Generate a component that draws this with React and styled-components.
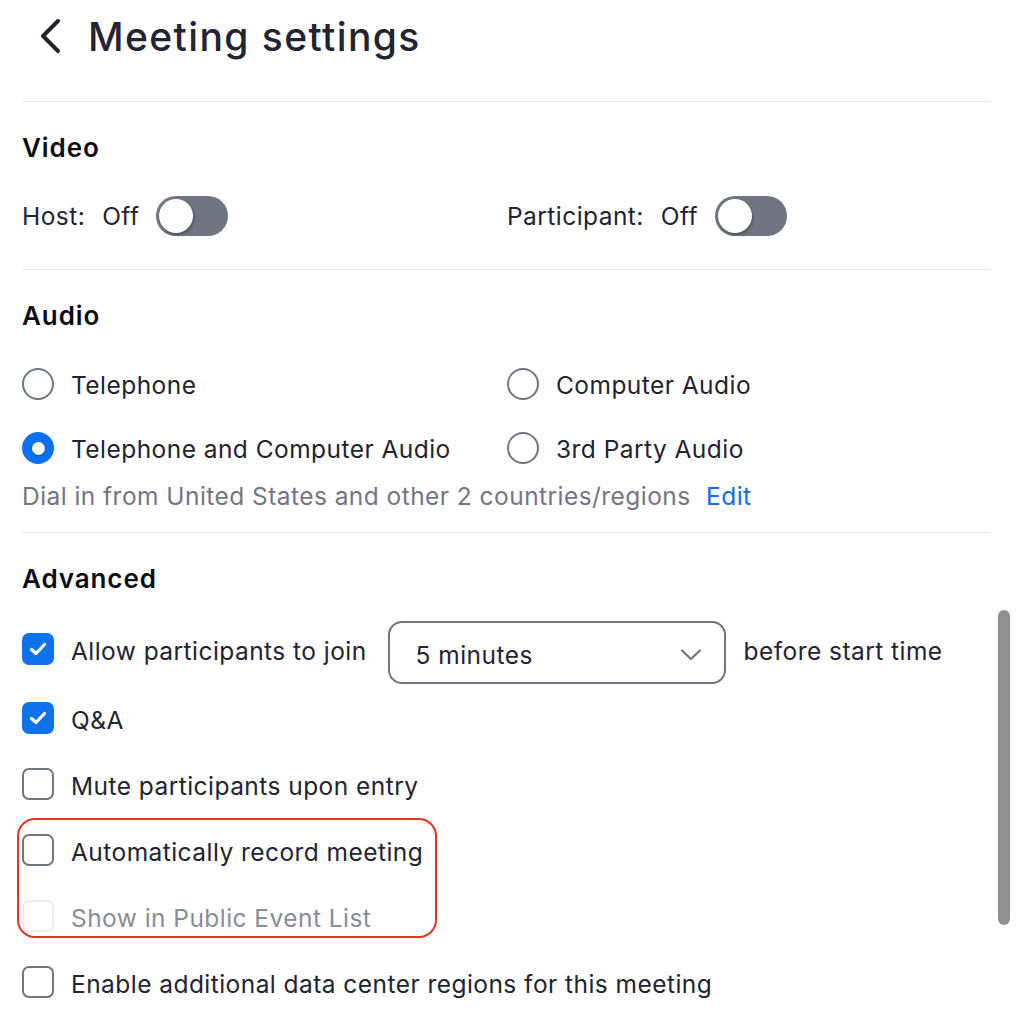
import React from 'react'
import styled, { createGlobalStyle } from 'styled-components'

const Global = createGlobalStyle`
  html, body {
    margin: 0;
    padding: 0;
    background: #fff;
  }
  body {
    font-family: Inter, "Noto Sans", sans-serif;
    color: #232333;
    -webkit-font-smoothing: antialiased;
  }
`

function App() {
  return (
    <Page>
      <Global />
      <Header>
        <BackButton aria-label="Back">
          <svg width="26" height="36" viewBox="0 0 26 36" fill="none">
            <path d="M20 3 L5 18 L20 33" stroke="#232333" strokeWidth="4" strokeLinecap="round" strokeLinejoin="round" />
          </svg>
        </BackButton>
        <Title>Meeting settings</Title>
      </Header>
      <Divider />

      <Section pb={33}>
        <Heading>Video</Heading>
        <TwoCols>
          <ToggleRow>
            <Label>Host:</Label>
            <Label>Off</Label>
            <Toggle />
          </ToggleRow>
          <ToggleRow>
            <Label>Participant:</Label>
            <Label>Off</Label>
            <Toggle />
          </ToggleRow>
        </TwoCols>
      </Section>
      <Divider />

      <Section pb={20}>
        <Heading>Audio</Heading>
        <RadioGrid>
          <OptionRow><Radio /><Label>Telephone</Label></OptionRow>
          <OptionRow><Radio /><Label>Computer Audio</Label></OptionRow>
          <OptionRow><Radio checked /><Label>Telephone and Computer Audio</Label></OptionRow>
          <OptionRow><Radio /><Label>3rd Party Audio</Label></OptionRow>
        </RadioGrid>
        <Hint>
          Dial in from United States and other 2 countries/regions <EditLink href="#">Edit</EditLink>
        </Hint>
      </Section>
      <Divider />

      <Section pb={0}>
        <Heading>Advanced</Heading>
        <CheckList>
          <CheckRow tall>
            <Checkbox checked />
            <Label>Allow participants to join</Label>
            <Select>
              <span>5 minutes</span>
              <svg width="22" height="12" viewBox="0 0 22 12" fill="none">
                <path d="M2 1.5 L11 10 L20 1.5" stroke="#6e7680" strokeWidth="2.2" strokeLinecap="round" strokeLinejoin="round" />
              </svg>
            </Select>
            <Label>before start time</Label>
          </CheckRow>
          <CheckRow>
            <Checkbox checked />
            <Label>Q&amp;A</Label>
          </CheckRow>
          <CheckRow>
            <Checkbox />
            <Label>Mute participants upon entry</Label>
          </CheckRow>
          <Highlighted>
            <CheckRow>
              <Checkbox />
              <Label>Automatically record meeting</Label>
            </CheckRow>
            <CheckRow>
              <Checkbox disabled />
              <Label disabled>Show in Public Event List</Label>
            </CheckRow>
            <HighlightRing />
          </Highlighted>
          <CheckRow>
            <Checkbox />
            <Label>Enable additional data center regions for this meeting</Label>
          </CheckRow>
        </CheckList>
      </Section>

      <ScrollThumb />
    </Page>
  )
}

function Toggle() {
  return (
    <Track>
      <Knob />
    </Track>
  )
}

function Radio({ checked }) {
  return <RadioCircle checked={checked}>{checked && <RadioDot />}</RadioCircle>
}

function Checkbox({ checked, disabled }) {
  return (
    <Box $checked={checked} $disabled={disabled}>
      {checked && (
        <svg width="18" height="14" viewBox="0 0 18 14" fill="none">
          <path d="M2.5 7.5 L7 11.5 L15.5 2.5" stroke="#fff" strokeWidth="3.2" strokeLinecap="round" strokeLinejoin="round" />
        </svg>
      )}
    </Box>
  )
}

const Page = styled.div`
  position: relative;
  width: 1034px;
  height: 1030px;
  overflow: hidden;
  box-sizing: border-box;
  padding: 0 44px 0 22px;
`

const Header = styled.div`
  display: flex;
  align-items: center;
  height: 72px;
  margin-bottom: 29px;
  padding-left: 16px;
`

const BackButton = styled.div`
  display: flex;
  align-items: center;
  width: 26px;
  margin-right: 24px;
`

const Title = styled.h1`
  margin: 0;
  font-size: 39px;
  font-weight: 500;
  letter-spacing: 1.4px;
  color: #232333;
`

const Divider = styled.div`
  height: 1px;
  background: #e6e6eb;
`

const Section = styled.div`
  padding-top: 30px;
  padding-bottom: ${p => p.pb}px;
`

const Heading = styled.h2`
  margin: 0;
  height: 32px;
  line-height: 32px;
  font-size: 26px;
  font-weight: 600;
  letter-spacing: 0.9px;
  color: #0c0c14;
`

const TwoCols = styled.div`
  display: grid;
  grid-template-columns: 485px 1fr;
  margin-top: 32px;
`

const ToggleRow = styled.div`
  display: flex;
  align-items: center;
  height: 40px;
  gap: 17px;
`

const Label = styled.span`
  font-size: 24.5px;
  letter-spacing: 0.45px;
  line-height: 32px;
  white-space: nowrap;
  color: ${p => (p.disabled ? '#8a8c98' : '#232333')};
`

const Track = styled.div`
  width: 72px;
  height: 40px;
  border-radius: 20px;
  background: #6e7681;
  display: flex;
  align-items: center;
  padding: 0 3px;
  box-sizing: border-box;
`

const Knob = styled.div`
  width: 34px;
  height: 34px;
  border-radius: 50%;
  background: #fff;
  box-shadow: 1px 2px 3px rgba(0, 0, 0, 0.3);
`

const RadioGrid = styled.div`
  display: grid;
  grid-template-columns: 485px 1fr;
  row-gap: 24px;
  margin-top: 32px;
`

const OptionRow = styled.div`
  display: flex;
  align-items: center;
  height: 40px;
  gap: 17px;

  & > span {
    padding-top: 2px;
  }
`

const RadioCircle = styled.div`
  width: 32px;
  height: 32px;
  box-sizing: border-box;
  border-radius: 50%;
  border: ${p => (p.checked ? 'none' : '2px solid #6e7680')};
  background: ${p => (p.checked ? '#0e72ed' : '#fff')};
  display: flex;
  align-items: center;
  justify-content: center;
  flex-shrink: 0;
`

const RadioDot = styled.div`
  width: 13px;
  height: 13px;
  border-radius: 50%;
  background: #fff;
  box-shadow: 0 1px 2px rgba(0, 0, 0, 0.35);
`

const Hint = styled.div`
  margin-top: 12px;
  font-size: 24.5px;
  letter-spacing: 0.45px;
  line-height: 32px;
  color: #747487;
`

const EditLink = styled.a`
  color: #0e6ee6;
  text-decoration: none;
  margin-left: 8px;
`

const CheckList = styled.div`
  display: flex;
  flex-direction: column;
  margin-top: 18px;
`

const CheckRow = styled.div`
  display: flex;
  align-items: center;
  height: ${p => (p.tall ? 72 : 66)}px;
  gap: 17px;

  & > span {
    padding-top: 4px;
  }
`

const Box = styled.div`
  width: 32px;
  height: 32px;
  box-sizing: border-box;
  border-radius: 7px;
  flex-shrink: 0;
  display: flex;
  align-items: center;
  justify-content: center;
  background: ${p => (p.$checked ? '#0e72ed' : '#fff')};
  border: ${p => (p.$checked ? 'none' : p.$disabled ? '2px solid #ececf0' : '2px solid #6e7680')};
`

const Select = styled.div`
  display: flex;
  align-items: center;
  justify-content: space-between;
  width: 338px;
  height: 63px;
  box-sizing: border-box;
  margin: 7px 1px 0 4px;
  padding: 4px 22px 0 26px;
  border: 2px solid #6e7680;
  border-radius: 14px;
  font-size: 24.5px;
  letter-spacing: 0.45px;
  color: #232333;
`

const Highlighted = styled.div`
  position: relative;
`

const HighlightRing = styled.div`
  position: absolute;
  left: -5px;
  top: 1px;
  width: 420px;
  height: 120px;
  box-sizing: border-box;
  border: 2px solid #e0371f;
  border-radius: 18px;
  pointer-events: none;
`

const ScrollThumb = styled.div`
  position: absolute;
  left: 998px;
  top: 610px;
  width: 12px;
  height: 315px;
  border-radius: 6px;
  background: #8f8f8f;
`

export default App
